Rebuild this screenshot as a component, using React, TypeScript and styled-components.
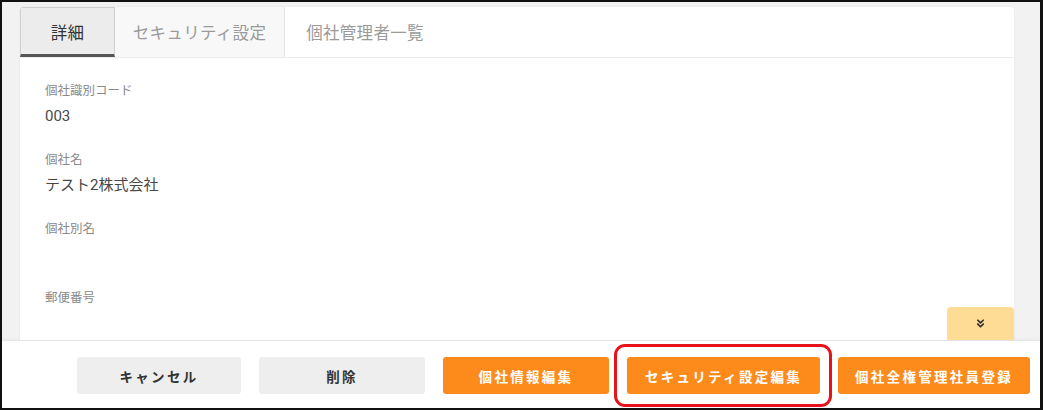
import React from "react";
import styled, { createGlobalStyle } from "styled-components";
import { ChevronsDown } from "lucide-react";

const Global = createGlobalStyle`
  html, body { margin: 0; padding: 0; background: #fff; }
  body { font-family: Roboto, "Noto Sans CJK JP", sans-serif; }
  * { box-sizing: border-box; }
`;

const Frame = styled.div`
  width: 1043px;
  height: 410px;
  border: 2px solid #111;
  border-right-width: 3px;
  background: #f2f2f2;
  display: flex;
  flex-direction: column;
  overflow: hidden;
`;

const Main = styled.div`
  flex: 1;
  min-height: 0;
  padding: 5px 26px 0 18px;
  display: flex;
`;

const Card = styled.div`
  position: relative;
  flex: 1;
  background: #fff;
  border-radius: 4px 4px 0 0;
  box-shadow: 0 0 2px rgba(0, 0, 0, 0.08);
  display: flex;
  flex-direction: column;
  overflow: hidden;
`;

const TabBar = styled.div`
  display: flex;
  height: 51px;
  border-bottom: 1px solid #ececec;
`;

const Tab = styled.div<{ $active?: boolean; $tint?: boolean; $last?: boolean; $w: number }>`
  width: ${(p) => p.$w}px;
  display: flex;
  align-items: center;
  justify-content: center;
  font-size: 16.5px;
  letter-spacing: 0.3px;
  color: ${(p) => (p.$active ? "#333" : "#9a9a9a")};
  background: ${(p) => (p.$active ? "#ececec" : p.$tint ? "#f8f8f8" : "#fff")};
  border: ${(p) => (p.$active ? "1px solid #cfcfcf" : "none")};
  border-right: ${(p) =>
    p.$last ? "none" : `1px solid ${p.$active ? "#cfcfcf" : "#e4e4e4"}`};
  border-bottom: ${(p) => (p.$active ? "3px solid #555" : "none")};
  padding-top: ${(p) => (p.$active ? "2px" : "0")};
`;

const Fields = styled.div`
  padding: 25px 25px 0;
  display: flex;
  flex-direction: column;
  gap: 25px;
`;

const Field = styled.div`
  display: flex;
  flex-direction: column;
  gap: 6px;
`;

const Label = styled.div`
  font-size: 12.5px;
  line-height: 16px;
  color: #8a8a8a;
`;

const Value = styled.div`
  font-size: 15px;
  line-height: 22px;
  height: 22px;
  color: #484848;
`;

const ExpandButton = styled.div`
  position: absolute;
  right: 0;
  bottom: 0;
  width: 67px;
  height: 33px;
  background: #fedc96;
  border-radius: 4px 4px 0 0;
  display: flex;
  align-items: center;
  justify-content: center;
  color: #333;
`;

const Footer = styled.div`
  height: 68px;
  flex: none;
  background: #fff;
  border-top: 1px solid #e8e8e8;
  box-shadow: 0 -1px 3px rgba(0, 0, 0, 0.04);
  display: flex;
  justify-content: flex-end;
  align-items: flex-start;
  padding: 16px 10px 0 0;
  gap: 18px;
`;

const ButtonWrap = styled.div`
  position: relative;
`;

const Button = styled.button<{ $primary?: boolean; $w: number }>`
  width: ${(p) => p.$w}px;
  height: 37px;
  border: none;
  border-radius: 3px;
  background: ${(p) => (p.$primary ? "#fd8b1c" : "#eeeeee")};
  color: ${(p) => (p.$primary ? "#fff" : "#333")};
  font-family: "Noto Sans CJK JP", sans-serif;
  font-size: 13.5px;
  font-weight: 700;
  letter-spacing: 2.3px;
  padding: 0;
  cursor: pointer;
`;

const Highlight = styled.div`
  position: absolute;
  left: -13px;
  right: -12px;
  top: -13px;
  bottom: -13px;
  border: 3px solid #e8121a;
  border-radius: 11px;
  pointer-events: none;
`;

const fields = [
  { label: "個社識別コード", value: "003" },
  { label: "個社名", value: "テスト2株式会社" },
  { label: "個社別名", value: "" },
  { label: "郵便番号", value: "" },
];

export default function App() {
  return (
    <>
      <Global />
      <Frame>
        <Main>
          <Card>
            <TabBar>
              <Tab $active $w={95}>詳細</Tab>
              <Tab $tint $w={170}>セキュリティ設定</Tab>
              <Tab $last $w={160}>個社管理者一覧</Tab>
            </TabBar>
            <Fields>
              {fields.map((f) => (
                <Field key={f.label}>
                  <Label>{f.label}</Label>
                  <Value>{f.value}</Value>
                </Field>
              ))}
            </Fields>
            <ExpandButton>
              <ChevronsDown size={13} strokeWidth={3.2} />
            </ExpandButton>
          </Card>
        </Main>
        <Footer>
          <Button $w={164}>キャンセル</Button>
          <Button $w={166}>削除</Button>
          <Button $primary $w={166}>個社情報編集</Button>
          <ButtonWrap>
            <Button $primary $w={193}>セキュリティ設定編集</Button>
            <Highlight />
          </ButtonWrap>
          <Button $primary $w={192}>個社全権管理社員登録</Button>
        </Footer>
      </Frame>
    </>
  );
}
